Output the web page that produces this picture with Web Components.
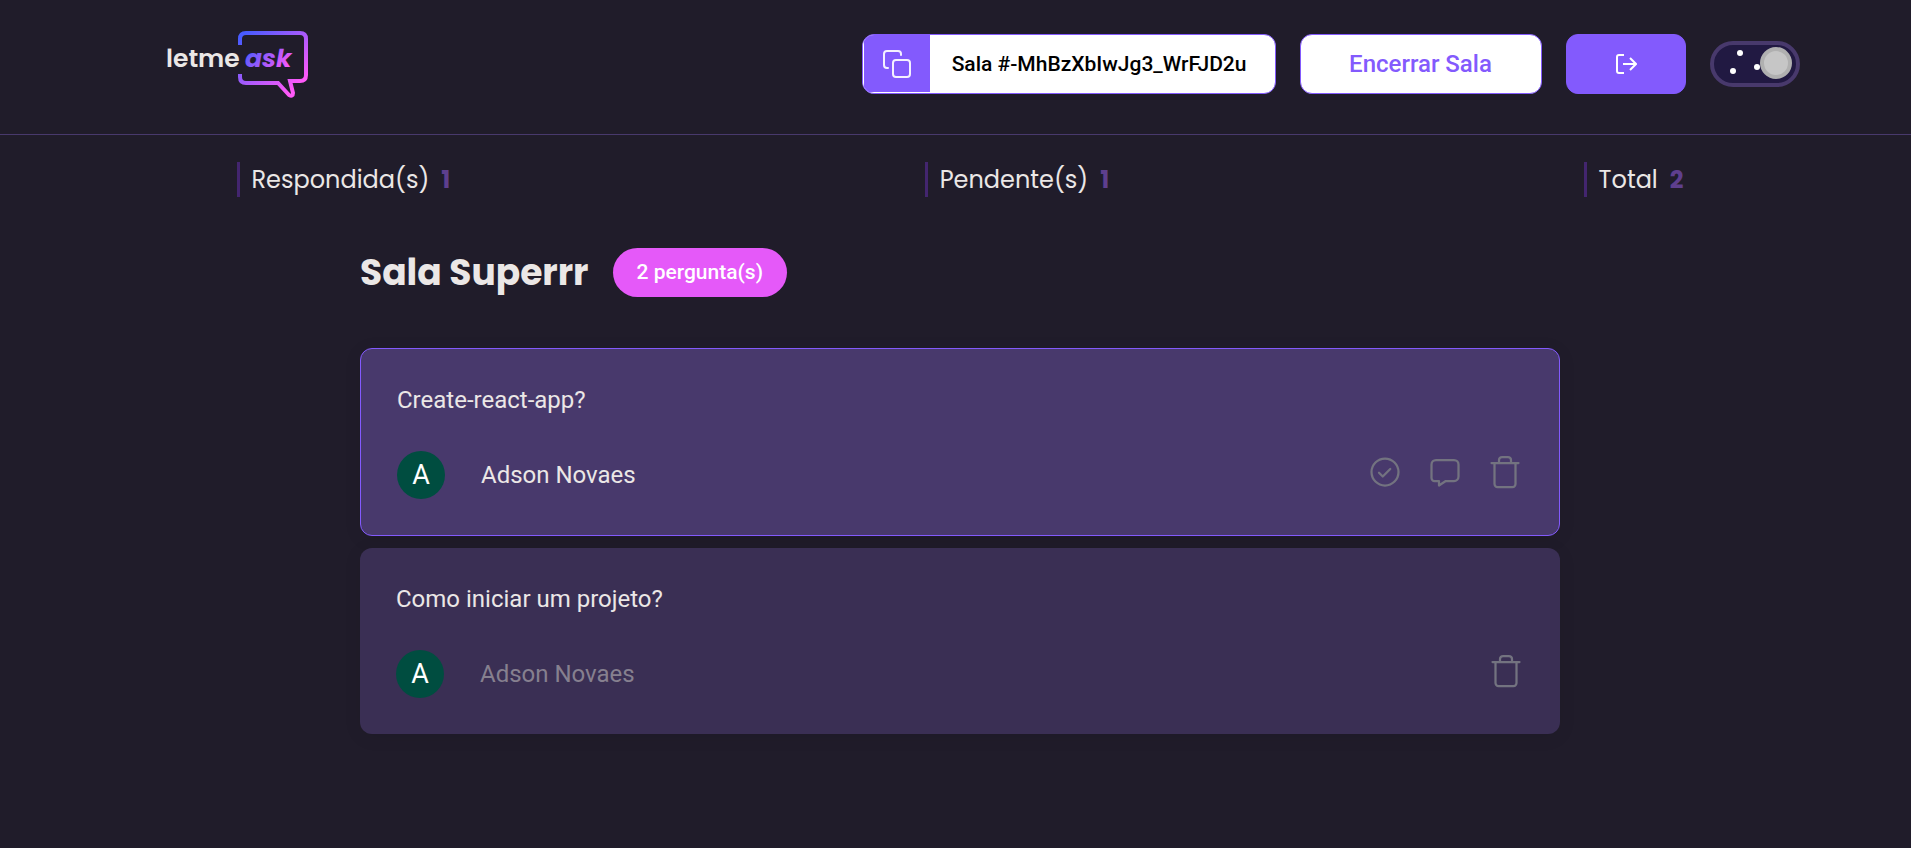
<!DOCTYPE html>
<html lang="pt-BR">
<head>
<meta charset="utf-8">
<meta name="viewport" content="width=device-width, initial-scale=1">
<title>Letmeask - Sala Superrr</title>
<style>
  :root {
    --bg: #201c2a;
    --text: #ebe7e6;
    --purple: #835afd;
    --line: #48396c;
    --pink: #e559f9;
    --display: Poppins, Inter, sans-serif;
  }
  body { margin: 0; min-height: 100vh; background: var(--bg); color: var(--text); font-family: Roboto, sans-serif; }
</style>
</head>
<body>
<ask-room></ask-room>
<script>
const define = (name, html, setup) => {
  const tpl = document.createElement('template');
  tpl.innerHTML = html;
  customElements.define(name, class extends HTMLElement {
    constructor() {
      super();
      this.attachShadow({ mode: 'open' }).append(tpl.content.cloneNode(true));
    }
    connectedCallback() { if (setup) setup(this, this.shadowRoot); }
  });
};

define('ask-logo', `
<style>:host{display:block} svg{display:block} text{font-family:var(--display)}</style>
<svg width="144" height="68" viewBox="0 0 144 68" role="img" aria-label="letmeask">
  <defs>
    <linearGradient id="g" gradientUnits="userSpaceOnUse" x1="76" y1="6" x2="124" y2="62"><stop stop-color="#485bff"/><stop offset="1" stop-color="#ff59f8"/></linearGradient>
    <linearGradient id="t" gradientUnits="userSpaceOnUse" x1="84" y1="14" x2="118" y2="44"><stop stop-color="#485bff"/><stop offset="1" stop-color="#ff59f8"/></linearGradient>
  </defs>
  <path fill="none" stroke="url(#g)" stroke-width="4" d="M74 15V9q0-6 6-6h54q6 0 6 6v36q0 6-6 6h-10l3 12q0 4-4 2L112 53H80q-6 0-6-6v-3"/>
  <text x="0" y="37" font-weight="600" font-size="25" fill="#ebe7e6">letme</text>
  <text x="79" y="37" font-weight="700" font-style="italic" font-size="25" fill="url(#t)">ask</text>
</svg>`);

define('room-code', `
<style>
:host{display:block}
button{display:flex;height:60px;padding:0;border:1px solid var(--purple);border-radius:12px;overflow:hidden;background:#fff;color:#000;font:500 21px Roboto,sans-serif;cursor:pointer}
.icon{display:grid;place-items:center;width:67px;height:57px;background:var(--purple);border-left:1px solid #fff;box-sizing:border-box}
.label{align-self:center;padding:0 28px 0 22px}
</style>
<button type="button" aria-label="Copiar código da sala">
  <span class="icon"><svg width="30" height="30" viewBox="0 0 30 30" fill="none" stroke="#f4f0ff" stroke-width="2" stroke-linecap="round"><rect x="11" y="11" width="17" height="17" rx="3"/><path d="M6 19H5q-3 0-3-3V5q0-3 3-3h11q3 0 3 3v1"/></svg></span>
  <span class="label"><slot></slot></span>
</button>`);

define('ask-button', `
<style>
:host{display:block}
button{display:grid;place-items:center;height:60px;min-width:120px;padding:0 48px;border:1px solid var(--purple);border-radius:12px;background:var(--purple);color:#fff;font:500 24px Roboto,sans-serif;cursor:pointer}
:host([outlined]) button{min-width:242px;background:#fff;color:var(--purple)}
</style>
<button type="button"><slot></slot></button>`, (el, root) => {
  const label = el.getAttribute('label');
  if (label) root.querySelector('button').setAttribute('aria-label', label);
});

define('theme-switch', `
<style>
:host{display:block}
label{display:block;position:relative;width:90px;height:46px;box-sizing:border-box;border:4px solid var(--line);border-radius:23px;background:#211942}
input{appearance:none;position:absolute;inset:0;width:100%;height:100%;margin:0;cursor:pointer}
svg{display:block;pointer-events:none;position:relative}
</style>
<label><input type="checkbox" checked aria-label="Tema escuro">
<svg width="82" height="38" viewBox="0 0 82 38"><g fill="#fff"><circle cx="26" cy="8" r="3"/><circle cx="19" cy="26" r="3"/><circle cx="43" cy="22" r="3"/></g><circle cx="62" cy="18" r="14" fill="#c6c6c6" stroke="#b0b0b0" stroke-width="4"/></svg>
</label>`);

define('ask-header', `
<style>
:host{display:block;border-bottom:1px solid var(--line)}
.inner{display:flex;align-items:center;justify-content:space-between;max-width:1634px;margin:0 auto;padding:30px 0 36px 54px}
.actions{display:flex;align-items:center;gap:24px}
.actions svg{display:block}
</style>
<header><div class="inner">
  <ask-logo></ask-logo>
  <div class="actions">
    <room-code>Sala #-MhBzXbIwJg3_WrFJD2u</room-code>
    <ask-button outlined>Encerrar Sala</ask-button>
    <ask-button label="Sair"><svg width="22" height="22" viewBox="0 0 22 22" fill="none" stroke="#fff" stroke-width="2"><path d="M9 2H4q-2 0-2 2v14q0 2 2 2h5M8 11h12M15 5l6 6-6 6"/></svg></ask-button>
    <theme-switch></theme-switch>
  </div>
</div></header>`);

define('room-stat', `
<style>
:host{display:flex;align-items:center;gap:12px;height:35px;padding-left:12px;border-left:3px solid #43256f;font:400 24px var(--display);white-space:nowrap}
b{font-weight:700;color:#5e3f8e}
</style>
<span><slot></slot></span><b></b>`, (el, root) => { root.querySelector('b').textContent = el.getAttribute('value'); });

const icons = {
  check: ['Marcar como respondida', '<circle cx="12" cy="12" r="9"/><path d="M8 12.500l2.500 2.500 5-5"/>'],
  comment: ['Dar destaque', '<path d="M5 18h3v3l4.500-3H18c1.700 0 3-1.300 3-3V7c0-1.700-1.300-3-3-3H6c-1.700 0-3 1.300-3 3v9c0 1.100.9 2 2 2Z"/>'],
  trash: ['Remover pergunta', '<path d="M3 6h18M8 6V4a2 2 0 0 1 2-2h4a2 2 0 0 1 2 2v2M19 6v14a2 2 0 0 1-2 2H7a2 2 0 0 1-2-2V6"/>']
};

define('question-card', `
<style>
:host{display:block;padding:36px;border-radius:12px;background:#3a2f54;box-shadow:0 3px 18px rgba(0,0,0,.08);font-size:24px;line-height:30px}
:host([highlighted]){background:#48396c;border:1px solid var(--purple)}
p{margin:0 0 36px}
footer{display:flex;align-items:center;justify-content:space-between}
.user{display:flex;align-items:center;gap:36px;color:#86808f}
:host([highlighted]) .user{color:var(--text)}
.avatar{display:grid;place-items:center;width:48px;height:48px;border-radius:50%;background:#004d40;color:#fff;font-size:27px}
.actions{display:flex;gap:24px;padding-bottom:6px}
button{padding:0;border:0;background:none;cursor:pointer}
svg{display:block}
</style>
<p><slot></slot></p>
<footer><div class="user"><span class="avatar">A</span><span class="name"></span></div><div class="actions"></div></footer>`, (el, root) => {
  root.querySelector('.name').textContent = el.getAttribute('author');
  root.querySelector('.actions').innerHTML = el.getAttribute('actions').split(' ').map(k =>
    `<button type="button" aria-label="${icons[k][0]}"><svg width="36" height="36" viewBox="0 0 24 24" fill="none" stroke="#737380" stroke-width="1.500" stroke-linecap="round" stroke-linejoin="round">${icons[k][1]}</svg></button>`).join('');
});

define('ask-room', `
<style>
:host{display:block}
.stats{display:flex;justify-content:space-between;max-width:1447px;margin:0 auto;padding:27px 0 0 9px}
main{max-width:1200px;margin:0 auto;padding:51px 0 36px 9px}
.title{display:flex;align-items:center;gap:24px;margin-bottom:51px}
h1{margin:0;font:700 36px/49px var(--display)}
.badge{padding:0 24px;border-radius:25px;background:var(--pink);color:#fff;font:500 21px/49px Roboto,sans-serif}
.list{display:grid;gap:12px}
</style>
<ask-header></ask-header>
<section class="stats" aria-label="Resumo">
  <room-stat value="1">Respondida(s)</room-stat>
  <room-stat value="1">Pendente(s)</room-stat>
  <room-stat value="2">Total</room-stat>
</section>
<main>
  <div class="title"><h1>Sala Superrr</h1><span class="badge">2 pergunta(s)</span></div>
  <div class="list">
    <question-card highlighted author="Adson Novaes" actions="check comment trash">Create-react-app?</question-card>
    <question-card author="Adson Novaes" actions="trash">Como iniciar um projeto?</question-card>
  </div>
</main>`);
</script>
</body>
</html>
